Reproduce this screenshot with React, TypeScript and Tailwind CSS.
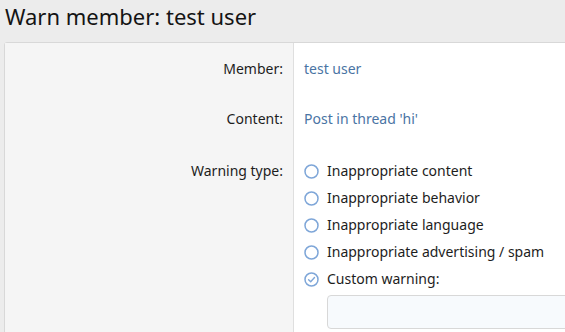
const options = [
  "Inappropriate content",
  "Inappropriate behavior",
  "Inappropriate language",
  "Inappropriate advertising / spam",
];

function Radio({ checked }: { checked?: boolean }) {
  return (
    <svg width="15" height="15" viewBox="0 0 15 15" className="shrink-0" fill="none">
      <circle cx="7.5" cy="7.5" r="6.5" stroke="#7ea6d8" strokeWidth="1.5" />
      {checked && (
        <path
          d="M4.6 7.7 6.7 9.7 10.5 5.6"
          stroke="#7ea6d8"
          strokeWidth="1.4"
          strokeLinecap="round"
          strokeLinejoin="round"
        />
      )}
    </svg>
  );
}

export default function App() {
  return (
    <div className="h-[332px] w-[565px] overflow-hidden bg-[#ececec] font-['Segoe_UI','Noto_Sans',sans-serif] text-[#1d1d1d]">
      <h1 className="px-[5px] pt-[1px] text-[22px] leading-[30px] text-[#141414]">Warn member: test user</h1>

      <div className="mt-[11px] ml-[4px] flex w-[600px] rounded-tl-[3px] border border-[#d8d8d8]">
        {/* labels */}
        <div className="w-[289px] shrink-0 border-r border-[#dfdfdf] bg-[#f5f5f5] pr-[10px] text-right text-[14px]">
          <div className="pt-[15px] leading-[22px]">Member:</div>
          <div className="pt-[28px] leading-[22px]">Content:</div>
          <div className="h-[300px] pt-[30px] leading-[22px]">Warning type:</div>
        </div>

        {/* values */}
        <div className="flex-1 bg-white pl-[10px] text-[14px]">
          <div className="pt-[15px] leading-[22px] text-[#4a74a4]">test user</div>
          <div className="pt-[28px] leading-[22px] text-[#4a74a4]">Post in thread 'hi'</div>
          <ul className="pt-[30px]">
            {options.map((o) => (
              <li key={o} className="flex h-[27px] items-start gap-[8px] leading-[22px]">
                <span className="pt-[4px]">
                  <Radio />
                </span>
                {o}
              </li>
            ))}
            <li className="flex h-[22px] items-start gap-[8px] leading-[22px]">
              <span className="pt-[4px]">
                <Radio checked />
              </span>
              Custom warning:
            </li>
          </ul>
          <div className="mt-[5px] ml-[23px] h-[34px] rounded-[4px] border border-[#d8d8d8] bg-[#f7fafd]" />
        </div>
      </div>
    </div>
  );
}
